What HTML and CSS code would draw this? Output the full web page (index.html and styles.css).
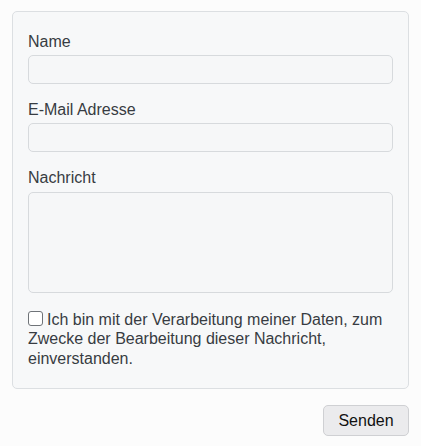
FILE: index.html
```html
<!DOCTYPE html>
<html lang="de">
<head>
    <meta charset="UTF-8">
    <meta name="viewport" content="width=device-width, initial-scale=1.0">
    <title>Kontakt</title>
    <link rel="stylesheet" href="styles.css">
</head>
<body>
    <form class="contact-form">
        <div class="card">
            <div class="form-group">
                <label class="form-label" for="name">Name</label>
                <input class="form-control" type="text" id="name">
            </div>
            <div class="form-group">
                <label class="form-label" for="email">E-Mail Adresse</label>
                <input class="form-control" type="email" id="email">
            </div>
            <div class="form-group">
                <label class="form-label" for="message">Nachricht</label>
                <textarea class="form-control message" id="message"></textarea>
            </div>
            <label class="consent">
                <input class="consent-box" type="checkbox">Ich bin mit der Verarbeitung meiner Daten, zum Zwecke der Bearbeitung dieser Nachricht, einverstanden.
            </label>
        </div>
        <div class="actions">
            <button class="button" type="submit">Senden</button>
        </div>
    </form>
</body>
</html>
```

FILE: styles.css
```css
body {
    margin: 0;
    padding: 11px 12px;
    background-color: #fcfcfc;
    font-family: "Liberation Sans", Arial, sans-serif;
    font-size: 16px;
    line-height: 1.2;
    color: #373c42;
}
.card {
    background-color: #f7f8f9;
    border: 1px solid #dcdfe2;
    border-radius: 5px;
    padding: 20px 15px 20px 15px;
}
.form-group {
    margin-bottom: 16px;
}
.form-label {
    display: block;
    margin-bottom: 4px;
}
.form-control {
    display: block;
    width: 100%;
    height: 29px;
    box-sizing: border-box;
    margin: 0;
    padding: 4px 8px;
    background-color: #f6f7f8;
    border: 1px solid #d7dadd;
    border-radius: 5px;
    font-family: inherit;
    font-size: 16px;
    color: #373c42;
}
.form-control.message {
    height: 101px;
    resize: none;
}
.form-group:nth-child(3) {
    margin-bottom: 17px;
}
.consent {
    display: block;
    line-height: 19.5px;
}
.consent-box {
    appearance: none;
    -webkit-appearance: none;
    display: inline-block;
    width: 15px;
    height: 15px;
    margin: 0 4px 0 0;
    vertical-align: -1px;
    background-color: #fff;
    border: 1px solid #6f7378;
    border-radius: 3px;
    box-sizing: border-box;
}
.actions {
    display: flex;
    justify-content: flex-end;
    margin-top: 16px;
}
.button {
    width: 86px;
    height: 31px;
    background-color: #ebebed;
    border: 1px solid #cfd0d3;
    border-radius: 5px;
    font-family: inherit;
    font-size: 16px;
    color: #111;
    cursor: pointer;
}
```
